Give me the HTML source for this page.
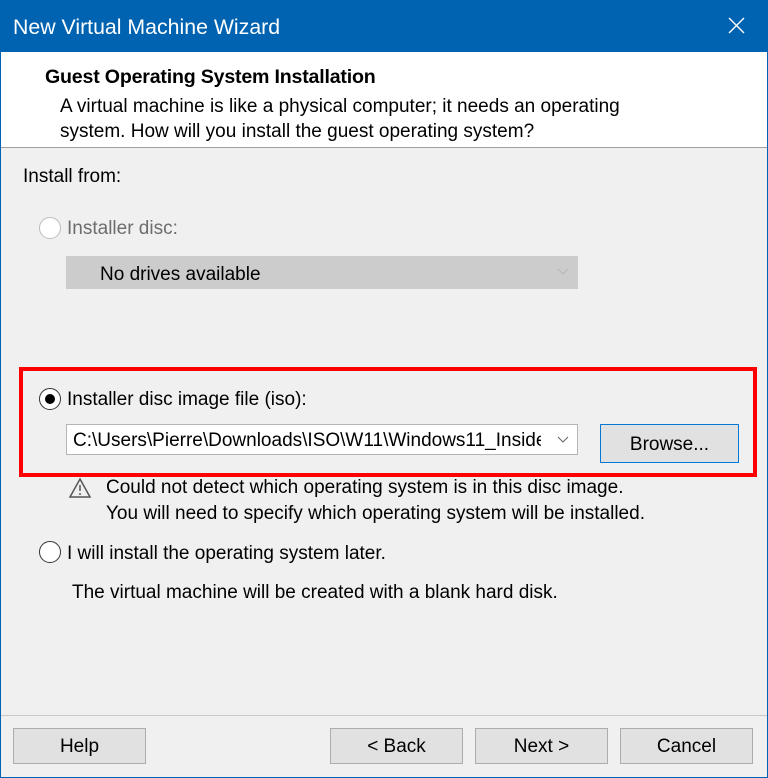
<!DOCTYPE html>
<html><head><style>
*{margin:0;padding:0;box-sizing:border-box}
body{width:768px;height:778px;overflow:hidden;background:#f0f0f0;font-family:"Liberation Sans",sans-serif;font-size:19px;color:#000;position:relative}
.a{position:absolute;white-space:nowrap}
.btn{position:absolute;background:#e1e1e1;border:1px solid #adadad;text-align:center;line-height:36px;height:36px}
.radio{position:absolute;width:22px;height:22px;border-radius:50%;border:1.5px solid #333;background:#fff}
</style></head><body>
<div class="a" style="left:0;top:0;width:768px;height:52px;background:#0063b1"></div>
<div class="a" style="left:13px;top:15px;color:#fff;font-size:21.3px">New Virtual Machine Wizard</div>
<svg class="a" style="left:728px;top:17px" width="17" height="17" viewBox="0 0 17 17"><path d="M1 1L16 16M16 1L1 16" stroke="#fff" stroke-width="1.4"/></svg>
<div class="a" style="left:0;top:52px;width:1px;height:726px;background:#0063b1"></div>
<div class="a" style="left:767px;top:52px;width:1px;height:726px;background:#0063b1"></div>
<div class="a" style="left:0;top:777px;width:768px;height:1px;background:#0063b1"></div>
<div class="a" style="left:1px;top:52px;width:766px;height:96px;background:#fff;border-bottom:1px solid #a0a0a0"></div>
<div class="a" style="left:45px;top:66px;font-weight:bold;font-size:19.6px;letter-spacing:-0.2px">Guest Operating System Installation</div>
<div class="a" style="left:60px;top:96px">A virtual machine is like a physical computer; it needs an operating</div>
<div class="a" style="left:60px;top:121px">system. How will you install the guest operating system?</div>

<div class="a" style="left:23px;top:166px">Install from:</div>
<div class="radio" style="left:39px;top:217px;border-color:#bcbcbc"></div>
<div class="a" style="left:67px;top:218px;color:#6d6d6d">Installer disc:</div>
<div class="a" style="left:66px;top:256px;width:512px;height:33px;background:#cccccc"></div>
<div class="a" style="left:100px;top:264px">No drives available</div>
<svg class="a" style="left:557px;top:268px" width="12" height="7" viewBox="0 0 12 7"><path d="M1 1L6 6L11 1" fill="none" stroke="#b8b8b8"/></svg>

<div class="a" style="left:19px;top:367px;width:738px;height:110px;border:4px solid #f00"></div>
<div class="radio" style="left:39px;top:388px"></div>
<div class="a" style="left:45px;top:394px;width:10px;height:10px;border-radius:50%;background:#000"></div>
<div class="a" style="left:67px;top:389px">Installer disc image file (iso):</div>
<div class="a" style="left:66px;top:424px;width:512px;height:31px;background:#fff;border:1px solid #b5b5b5"></div>
<div class="a" style="left:73px;top:430px;width:468px;overflow:hidden">C:\Users\Pierre\Downloads\ISO\W11\Windows11_Insider</div>
<svg class="a" style="left:557px;top:436px" width="12" height="7" viewBox="0 0 12 7"><path d="M1 1L6 6L11 1" fill="none" stroke="#666"/></svg>
<div class="btn" style="left:600px;top:424px;width:139px;height:39px;line-height:39px;border:1px solid #0078d7">Browse...</div>

<svg class="a" style="left:68px;top:477px" width="24" height="22" viewBox="0 0 24 22"><path d="M12 2 L22 20 H2 Z" fill="none" stroke="#555" stroke-width="1.5"/><path d="M12 8v6M12 16v2" stroke="#555" stroke-width="1.5"/></svg>
<div class="a" style="left:106px;top:477px">Could not detect which operating system is in this disc image.</div>
<div class="a" style="left:106px;top:503px">You will need to specify which operating system will be installed.</div>

<div class="radio" style="left:39px;top:541px"></div>
<div class="a" style="left:67px;top:543px">I will install the operating system later.</div>
<div class="a" style="left:72px;top:582px">The virtual machine will be created with a blank hard disk.</div>

<div class="a" style="left:1px;top:715px;width:766px;height:1px;background:#c8c8c8"></div>
<div class="btn" style="left:13px;top:728px;width:133px">Help</div>
<div class="btn" style="left:330px;top:728px;width:133px">&lt; Back</div>
<div class="btn" style="left:475px;top:728px;width:133px">Next &gt;</div>
<div class="btn" style="left:620px;top:728px;width:133px">Cancel</div>
</body></html>
